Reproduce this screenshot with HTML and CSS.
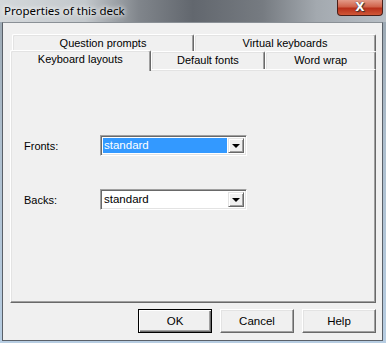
FILE: index.html
```html
<!DOCTYPE html>
<html lang="en">
<head>
  <meta charset="UTF-8" />
  <title>Properties of this deck</title>
  <link rel="stylesheet" href="styles.css">
</head>
<body>
  <div class="window">
    <div class="titlebar">
      <span class="title">Properties of this deck</span>
      <div class="close">X</div>
    </div>
    <div class="client">
      <div class="tabs">
        <div class="tab-row back">
          <div class="tab wide">Question prompts</div>
          <div class="tab wide">Virtual keyboards</div>
        </div>
        <div class="tab-row front">
          <div class="tab active t1">Keyboard layouts</div>
          <div class="tab t2">Default fonts</div>
          <div class="tab t3">Word wrap</div>
        </div>
        <div class="panel">
          <div class="field">
            <label>Fronts:</label>
            <div class="combo">
              <span class="value selected">standard</span>
              <span class="drop"><i class="arrow"></i></span>
            </div>
          </div>
          <div class="field">
            <label>Backs:</label>
            <div class="combo">
              <span class="value">standard</span>
              <span class="drop"><i class="arrow"></i></span>
            </div>
          </div>
        </div>
      </div>
      <div class="buttons">
        <button class="btn default">OK</button>
        <button class="btn">Cancel</button>
        <button class="btn">Help</button>
      </div>
    </div>
  </div>
</body>
</html>
```

FILE: styles.css
```css
body {
  margin: 0;
  font-family: "Liberation Sans", Arial, sans-serif;
  font-size: 11px;
  color: #000;
}
.window {
  width: 386px;
  height: 343px;
  box-sizing: border-box;
  padding: 0 3px 2px 2px;
  background: linear-gradient(to bottom, #9aa6b0 0%, #aebfce 40%, #b7cde2 100%);
  display: flex;
  flex-direction: column;
}
.titlebar {
  height: 22px;
  margin: 0 -3px 0 -2px;
  display: flex;
  align-items: flex-start;
  background: linear-gradient(to right, #d4d8db 0%, #c3c8cc 22%, #80858b 36%, #62676e 50%, #767b81 68%, #a3a9af 82%, #b8bfc6 100%);
}
.title {
  font-family: "Noto Sans", sans-serif;
  font-size: 11.5px;
  padding: 3px 0 0 4px;
  line-height: 15px;
  text-shadow: 0 0 6px #fff, 0 0 4px #fff;
}
.close {
  margin-left: auto;
  margin-right: 3px;
  width: 46px;
  height: 16px;
  box-sizing: border-box;
  border: 1px solid #4a1f18;
  border-top: none;
  border-radius: 0 0 4px 4px;
  background: linear-gradient(to bottom, #e39a88 0%, #d0634b 45%, #b8301a 55%, #d05838 100%);
  color: #fff;
  font-family: "DejaVu Sans", sans-serif;
  font-weight: bold;
  font-size: 12px;
  line-height: 14px;
  text-align: center;
  text-shadow: 0 0 1px #222, 1px 1px 1px #333;
}
.client {
  flex: 1;
  background: #f0f0f0;
  border: 1px solid #5a6068;
  border-top-color: #8a9096;
  display: flex;
  flex-direction: column;
}
.tabs {
  margin: 11px 6px 0 7px;
  display: flex;
  flex-direction: column;
}
.tab-row {
  display: flex;
}
.tab {
  box-sizing: border-box;
  background: #f0f0f0;
  border-top: 1px solid #fff;
  border-left: 1px solid #fff;
  border-right: 1px solid #696969;
  box-shadow: inset -1px 0 #a0a0a0, inset 1px 1px #e3e3e3;
  border-radius: 2px 2px 0 0;
  text-align: center;
}
.back {
  padding-left: 2px;
  height: 17px;
}
.back .tab {
  width: 182px;
  line-height: 16px;
}
.front {
  height: 19px;
  margin-top: -1px;
  align-items: flex-end;
  position: relative;
  z-index: 1;
}
.front .tab {
  height: 18px;
  line-height: 17px;
}
.front .t1 { width: 141px; }
.front .t2 { width: 115px; }
.front .t3 { width: 111px; }
.front .tab.active {
  height: 21px;
  margin-bottom: -2px;
  line-height: 16px;
  padding-bottom: 4px;
}
.panel {
  height: 234px;
  box-sizing: border-box;
  border-top: 1px solid #fff;
  border-left: 1px solid #fff;
  border-right: 1px solid #696969;
  border-bottom: 1px solid #696969;
  box-shadow: inset -1px -1px #a0a0a0, inset 1px 1px #e3e3e3;
  padding: 65px 0 0 13px;
  display: flex;
  flex-direction: column;
  gap: 33px;
}
.field {
  display: flex;
  align-items: center;
}
.field label {
  width: 76px;
}
.combo {
  width: 147px;
  height: 21px;
  box-sizing: border-box;
  border-top: 1px solid #a0a0a0;
  border-left: 1px solid #a0a0a0;
  border-right: 1px solid #fff;
  border-bottom: 1px solid #fff;
  box-shadow: inset 1px 1px #696969, inset -1px -1px #e3e3e3;
  background: #fff;
  padding: 2px;
  display: flex;
  gap: 1px;
}
.value {
  flex: 1;
  padding-left: 1px;
  line-height: 15px;
  font-size: 11.5px;
}
.value.selected {
  background: #3399ff;
  color: #fff;
}
.drop {
  width: 16px;
  box-sizing: border-box;
  background: #f0f0f0;
  border-top: 1px solid #e3e3e3;
  border-left: 1px solid #e3e3e3;
  border-right: 1px solid #696969;
  border-bottom: 1px solid #696969;
  box-shadow: inset 1px 1px #fff, inset -1px -1px #a0a0a0;
  display: flex;
  align-items: center;
  justify-content: center;
}
.arrow {
  width: 0;
  height: 0;
  border-left: 4px solid transparent;
  border-right: 4px solid transparent;
  border-top: 4px solid #000;
  margin-top: 1px;
}
.buttons {
  display: flex;
  justify-content: flex-end;
  gap: 8px;
  margin: 6px 6px 0 0;
}
.btn {
  width: 74px;
  height: 24px;
  box-sizing: border-box;
  font-family: "Liberation Sans", Arial, sans-serif;
  font-size: 11.5px;
  color: #000;
  background: #f0f0f0;
  border-top: 1px solid #fff;
  border-left: 1px solid #fff;
  border-right: 1px solid #696969;
  border-bottom: 1px solid #696969;
  box-shadow: inset -1px -1px #a0a0a0, inset 1px 1px #e3e3e3;
  padding: 0;
}
.btn.default {
  border: 1px solid #000;
  box-shadow: inset 1px 1px #fff, inset -1px -1px #696969, inset -2px -2px #a0a0a0;
}
```
